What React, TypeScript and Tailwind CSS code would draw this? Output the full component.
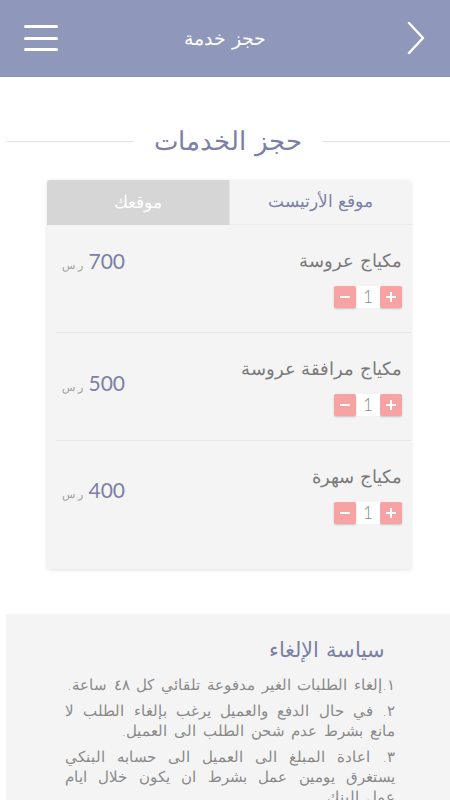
import { useState } from "react";

interface Service {
  id: number;
  name: string;
  price: number;
  priceOffset: string;
}

const services: Service[] = [
  { id: 1, name: "مكياج عروسة", price: 700, priceOffset: "mt-0" },
  { id: 2, name: "مكياج مرافقة عروسة", price: 500, priceOffset: "mt-[14px]" },
  { id: 3, name: "مكياج سهرة", price: 400, priceOffset: "mt-[13px]" },
];

const policy = [
  "١.إلغاء الطلبات الغير مدفوعة تلقائي كل ٤٨ ساعة.",
  "٢. في حال الدفع والعميل يرغب بإلغاء الطلب لا مانع بشرط عدم شحن الطلب الى العميل.",
  "٣. اعادة المبلغ الى العميل الى حسابه البنكي يستغرق يومين عمل بشرط ان يكون خلال ايام عمل البنك.",
];

const Stepper = ({ value, onChange }: { value: number; onChange: (v: number) => void }) => (
  <div className="flex items-center h-[22px]">
    <button
      onClick={() => onChange(value + 1)}
      className="w-[22px] h-[22px] rounded-[2px] bg-[#f8a3a3] shadow-[0_1px_2px_rgba(0,0,0,0.2)] flex items-center justify-center"
    >
      <svg width="12" height="12" viewBox="0 0 12 12">
        <path d="M6 1v10M1 6h10" stroke="#fff" strokeWidth="2" />
      </svg>
    </button>
    <span className="w-[24px] h-[22px] bg-white flex items-center justify-center text-[17px] text-[#8a8a8a] font-['Lato',sans-serif] font-light">
      {value}
    </span>
    <button
      onClick={() => onChange(Math.max(1, value - 1))}
      className="w-[22px] h-[22px] rounded-[2px] bg-[#f8a3a3] shadow-[0_1px_2px_rgba(0,0,0,0.2)] flex items-center justify-center"
    >
      <svg width="12" height="12" viewBox="0 0 12 12">
        <path d="M1 6h10" stroke="#fff" strokeWidth="2" />
      </svg>
    </button>
  </div>
);

export default function App() {
  const [tab, setTab] = useState<"artist" | "you">("artist");
  const [qty, setQty] = useState<Record<number, number>>({ 1: 1, 2: 1, 3: 1 });

  return (
    <div dir="rtl" className="w-[450px] min-h-[800px] bg-white font-['DejaVu_Sans',sans-serif] font-light">
      <header className="h-[77px] bg-[#8f97bb] border-b border-[#8890b4] flex items-center justify-between px-[24px]">
        <button className="w-[34px] h-[34px] flex items-center justify-start">
          <svg width="20" height="34" viewBox="0 0 20 34">
            <path d="M3 2l14 15L3 32" fill="none" stroke="#fff" strokeWidth="2.5" strokeLinecap="round" strokeLinejoin="round" />
          </svg>
        </button>
        <h1 className="text-[19px] text-white">حجز خدمة</h1>
        <button className="w-[34px] h-[26px] flex flex-col justify-between">
          <span className="block h-[3px] w-full bg-white rounded-full" />
          <span className="block h-[3px] w-full bg-white rounded-full" />
          <span className="block h-[3px] w-full bg-white rounded-full" />
        </button>
      </header>

      <div className="mt-[49px] flex items-center ml-[6px]">
        <div className="h-px flex-1 bg-[#e3e3e3]" />
        <h2 className="px-[20px] text-[26px] leading-[30px] text-[#7b80a8]">حجز الخدمات</h2>
        <div className="h-px flex-1 bg-[#e3e3e3]" />
      </div>

      <div className="mr-[39px] mt-[24px] w-[364px] bg-[#f4f4f4] rounded-[3px] shadow-[0_1px_4px_rgba(0,0,0,0.12)] overflow-hidden">
        <div className="flex h-[45px]">
          <button
            onClick={() => setTab("artist")}
            className={
              tab === "artist"
                ? "flex-1 bg-[#f4f4f4] text-[#7b80a8] text-[17px] border-b border-[#ebebeb] border-l border-l-[#e6e6e6]"
                : "flex-1 bg-[#d6d6d6] text-white text-[17px]"
            }
          >
            موقع الأرتيست
          </button>
          <button
            onClick={() => setTab("you")}
            className={
              tab === "you"
                ? "flex-1 bg-[#f4f4f4] text-[#7b80a8] text-[17px] border-b border-[#ebebeb]"
                : "flex-1 bg-[#d6d6d6] text-white text-[17px]"
            }
          >
            موقعك
          </button>
        </div>

        {services.map((s, i) => (
          <div
            key={s.id}
            className={
              i === services.length - 1
                ? "ml-[9px] pt-[24px] pb-[45px] pr-[9px] pl-[6px] flex justify-between"
                : "ml-[9px] pt-[24px] pb-[24px] pr-[9px] pl-[6px] flex justify-between border-b border-[#e6e6e6]"
            }
          >
            <div className="flex flex-col items-start">
              <p className="h-[24px] leading-[24px] text-[18px] text-[#7a7a7a]">{s.name}</p>
              <div className="mt-[13px]">
                <Stepper value={qty[s.id]} onChange={(v) => setQty({ ...qty, [s.id]: v })} />
              </div>
            </div>
            <div className={"flex items-baseline gap-[5px] h-[24px] " + s.priceOffset}>
              <span className="text-[21px] leading-[24px] text-[#7b80a8] font-['Lato',sans-serif] font-normal">{s.price}</span>
              <span className="text-[11px] text-[#a0a0a0]">ر.س</span>
            </div>
          </div>
        ))}
      </div>

      <section className="mt-[45px] ml-[6px] bg-[#f4f4f4] pt-[24px] pb-[20px] pr-[55px] pl-[59px]">
        <h3 className="pr-[10px] text-[21px] leading-[24px] text-[#7b80a8]">سياسة الإلغاء</h3>
        <div className="mt-[13px] flex flex-col gap-[6px]">
          {policy.map((p) => (
            <p key={p} className="text-[15px] leading-[20px] [word-spacing:2px] text-[#8a8a8a] text-justify">
              {p}
            </p>
          ))}
        </div>
      </section>
    </div>
  );
}
